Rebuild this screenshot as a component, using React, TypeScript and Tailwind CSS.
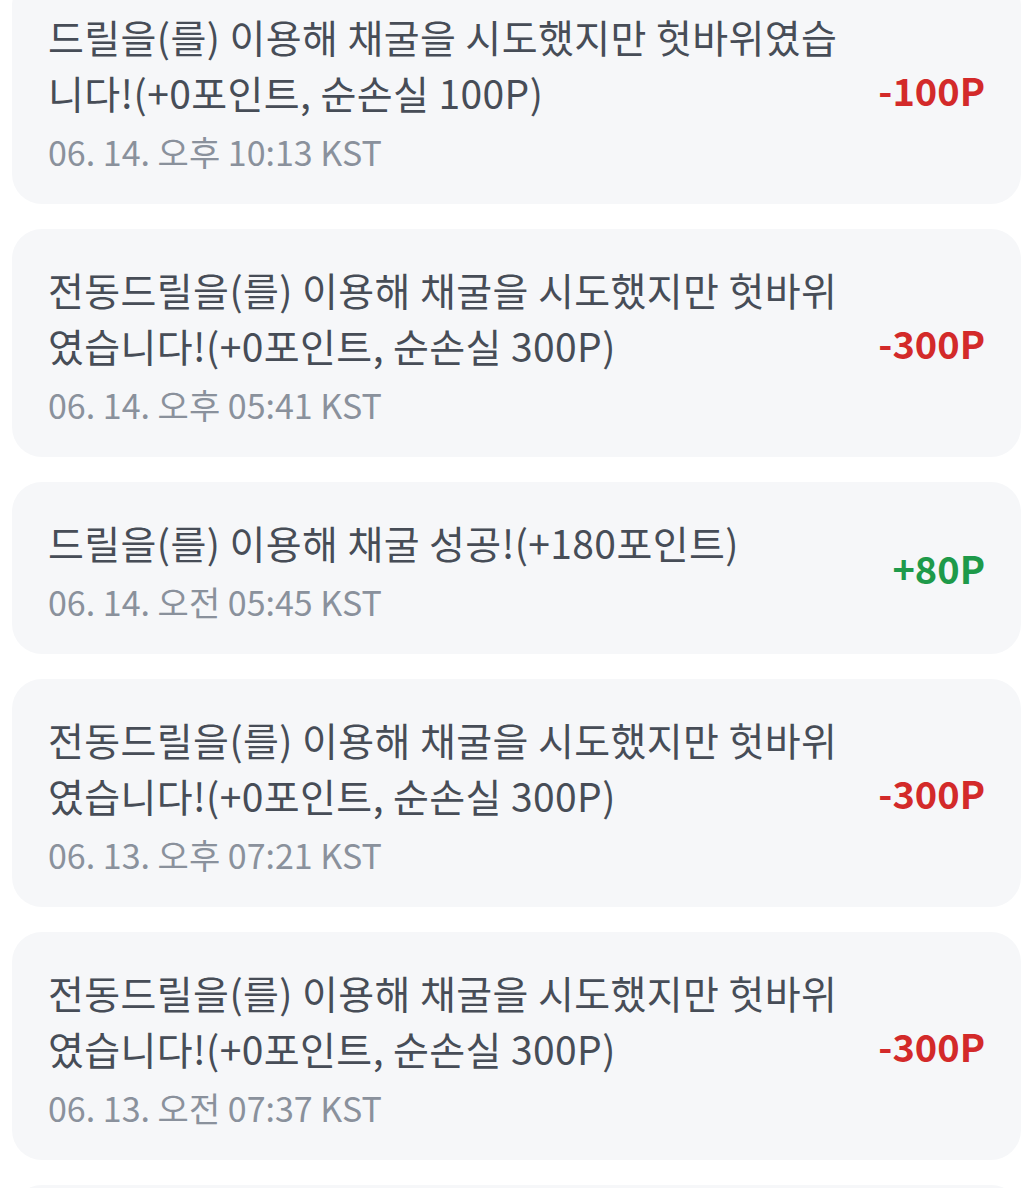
import React from 'react'

interface Entry {
  message: string
  time: string
  amount: number
}

const entries: Entry[] = [
  { message: '드릴을(를) 이용해 채굴을 시도했지만 헛바위였습니다!(+0포인트, 순손실 100P)', time: '06. 14. 오후 10:13 KST', amount: -100 },
  { message: '전동드릴을(를) 이용해 채굴을 시도했지만 헛바위였습니다!(+0포인트, 순손실 300P)', time: '06. 14. 오후 05:41 KST', amount: -300 },
  { message: '드릴을(를) 이용해 채굴 성공!(+180포인트)', time: '06. 14. 오전 05:45 KST', amount: 80 },
  { message: '전동드릴을(를) 이용해 채굴을 시도했지만 헛바위였습니다!(+0포인트, 순손실 300P)', time: '06. 13. 오후 07:21 KST', amount: -300 },
  { message: '전동드릴을(를) 이용해 채굴을 시도했지만 헛바위였습니다!(+0포인트, 순손실 300P)', time: '06. 13. 오전 07:37 KST', amount: -300 },
  { message: '드릴을(를) 이용해 채굴 성공!(+180포인트)', time: '06. 13. 오전 02:10 KST', amount: 80 },
]

function HistoryCard({ entry }: { entry: Entry }) {
  const positive = entry.amount > 0
  return (
    <div className="flex items-center gap-6 rounded-[30px] bg-[#f6f7f9] px-9 py-8">
      <div className="flex-1 min-w-0">
        <p className="text-[39px] leading-[56px] tracking-[0.4px] text-[#474d57]">{entry.message}</p>
        <p className="mt-3 text-[34px] leading-[40px] text-[#8a919c]">{entry.time}</p>
      </div>
      <span
        className={`shrink-0 text-[38px] font-bold leading-none ${
          positive ? 'text-[#1e9a4a]' : 'text-[#d32a2a]'
        }`}
      >
        {positive ? `+${entry.amount}P` : `${entry.amount}P`}
      </span>
    </div>
  )
}

export default function App() {
  return (
    <div
      className="bg-white px-3"
      style={{ fontFamily: '"Noto Sans CJK KR", "Noto Sans", sans-serif' }}
    >
      <div className="-mt-6 flex flex-col gap-[25px] pb-6">
        {entries.map((entry, i) => (
          <HistoryCard key={i} entry={entry} />
        ))}
      </div>
    </div>
  )
}
